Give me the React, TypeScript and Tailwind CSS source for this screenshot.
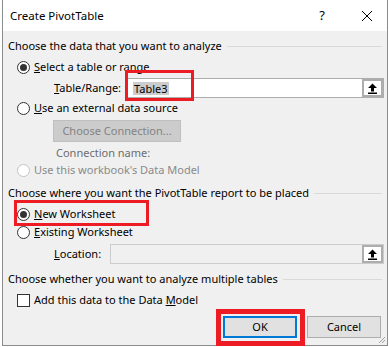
import React from 'react';

function Radio({ checked = false, disabled = false }: { checked?: boolean; disabled?: boolean }) {
  return (
    <span
      className={`flex items-center justify-center w-[13px] h-[13px] rounded-full border bg-white shrink-0 ${
        disabled ? 'border-[#c4c4c4] bg-[#f7f7f7]' : 'border-[#333333]'
      }`}
    >
      {checked && <span className="w-[7px] h-[7px] rounded-full bg-[#333333]"></span>}
    </span>
  );
}

function UploadBtn() {
  return (
    <span className="flex items-center justify-center w-[21px] h-full border-2 border-[#adadad] bg-white shrink-0">
      <svg width="11" height="11" viewBox="0 0 11 11">
        <path d="M5.5 0.5 L10 5 L7 5 L7 8.5 L4 8.5 L4 5 L1 5 Z" fill="#000" />
        <rect x="1" y="9.5" width="9" height="1.5" fill="#000" />
      </svg>
    </span>
  );
}

function Section({ label }: { label: string }) {
  return (
    <div className="flex items-center gap-[5px] h-[16px] pr-[3px]">
      <span className="whitespace-nowrap">{label}</span>
      <span className="flex-1 h-px bg-[#d9d9d9]"></span>
    </div>
  );
}

export default function App() {
  return (
    <div className="w-[389px] h-[347px] bg-white overflow-hidden font-['Noto_Sans',sans-serif] text-[11px] text-black">
      <div className="relative ml-[2px] w-[386px] h-[346px] border-x border-b border-[#8c8c8c] bg-[#f0f0f0] flex flex-col">
        {/* Title bar */}
        <div className="h-[31px] bg-white flex items-center pl-[7px] pr-[14px] shrink-0">
          <span className="text-[11.5px] flex-1">Create PivotTable</span>
          <span className="text-[13px] mr-[36px]">?</span>
          <svg width="12" height="12" viewBox="0 0 12 12">
            <path d="M1 1 L11 11 M11 1 L1 11" stroke="#000" strokeWidth="1" />
          </svg>
        </div>

        <div className="flex flex-col pl-[5px] pr-[2px]">
          <div className="mt-[7px]">
            <Section label="Choose the data that you want to analyze" />
          </div>

          <div className="mt-[5px] h-[16px] flex items-center gap-[4px] pl-[9px]">
            <Radio checked />
            <span>
              <span className="underline">S</span>elect a table or range
            </span>
          </div>

          <div className="mt-[3px] h-[20px] flex items-center pl-[46px] pr-[1px]">
            <span className="w-[73px]">
              <span className="underline">T</span>able/Range:
            </span>
            <div className="flex-1 h-[20px] flex border border-[#adadad] bg-white">
              <span className="flex-1 flex items-center pl-[5px]">
                <span className="bg-[#cccccc] px-px leading-[13px]">Table3</span>
              </span>
              <UploadBtn />
            </div>
          </div>

          <div className="mt-[2px] h-[16px] flex items-center gap-[4px] pl-[9px]">
            <Radio />
            <span>
              <span className="underline">U</span>se an external data source
            </span>
          </div>

          <div className="mt-[4px] h-[22px] pl-[45px] flex">
            <span className="w-[128px] h-[22px] flex items-center justify-center border border-[#bfbfbf] bg-[#cccccc] text-[#838383]">
              Choose Connection...
            </span>
          </div>

          <div className="mt-[3px] h-[16px] flex items-center pl-[48px] text-[#6d6d6d]">Connection name:</div>

          <div className="mt-[1px] h-[16px] flex items-center gap-[4px] pl-[9px] text-[#8a8a8a]">
            <Radio disabled />
            <span>Use this workbook's Data Model</span>
          </div>

          <div className="mt-[7px]">
            <Section label="Choose where you want the PivotTable report to be placed" />
          </div>

          <div className="mt-[5px] h-[16px] flex items-center gap-[4px] pl-[9px]">
            <Radio checked />
            <span>
              <span className="underline">N</span>ew Worksheet
            </span>
          </div>

          <div className="mt-[2px] h-[16px] flex items-center gap-[4px] pl-[9px]">
            <Radio />
            <span>
              <span className="underline">E</span>xisting Worksheet
            </span>
          </div>

          <div className="mt-[4px] h-[20px] flex items-center pl-[46px] pr-[1px]">
            <span className="w-[56px]">
              <span className="underline">L</span>ocation:
            </span>
            <div className="flex-1 h-[20px] flex border border-[#cccccc] bg-[#f0f0f0]">
              <span className="flex-1"></span>
              <UploadBtn />
            </div>
          </div>

          <div className="mt-[7px]">
            <Section label="Choose whether you want to analyze multiple tables" />
          </div>

          <div className="mt-[5px] h-[16px] flex items-center gap-[4px] pl-[9px]">
            <span className="w-[13px] h-[13px] border border-[#333333] bg-white shrink-0"></span>
            <span>
              Add this data to the Data <span className="underline">M</span>odel
            </span>
          </div>

          <div className="mt-[8px] flex justify-end gap-[10px] pr-[4px]">
            <span className="w-[74px] h-[22px] flex items-center justify-center border-2 border-[#0078d7] bg-[#e1e1e1]">
              OK
            </span>
            <span className="w-[74px] h-[22px] flex items-center justify-center border border-[#adadad] bg-[#e1e1e1]">
              Cancel
            </span>
          </div>
        </div>

        {/* resize grip */}
        <svg className="absolute right-[1px] bottom-[1px]" width="8" height="8" viewBox="0 0 8 8">
          <path d="M7 1 L1 7 M7 4 L4 7" stroke="#a0a0a0" strokeWidth="1" />
        </svg>

        {/* annotation boxes */}
        <div className="absolute left-[122px] top-[70px] w-[69px] h-[31px] border-[3px] border-[#ed1c24]"></div>
        <div className="absolute left-[11px] top-[200px] w-[135px] h-[26px] border-[3px] border-[#ed1c24]"></div>
        <div className="absolute left-[213px] top-[309px] w-[89px] h-[37px] border-[5px] border-[#ed1c24]"></div>
      </div>
    </div>
  );
}
